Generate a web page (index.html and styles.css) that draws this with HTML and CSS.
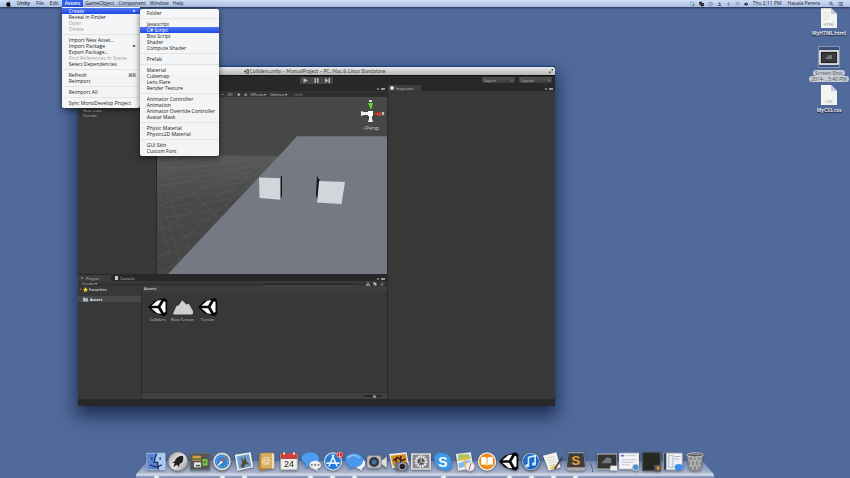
FILE: index.html
```html
<!DOCTYPE html>
<html lang="en">
<head>
<meta charset="utf-8">
<title>Desktop</title>
<link rel="stylesheet" href="styles.css">
</head>
<body>
<header class="menubar">
  <nav class="menus" aria-label="Application menu">
    <button class="menu-title apple" aria-label="Apple"><svg viewBox="0 0 16 18"><path d="M11 0c0 2-1.400 4-3.300 4C7.500 2 9 .4 11 0zM8 5c1 0 1.700-.8 3.200-.8 1.300 0 2.600.7 3.400 1.900-3 1.700-2.500 5.700.6 6.900-.8 2.200-2.200 4.600-3.800 4.600-1.200 0-1.600-.8-3.100-.8s-2 .8-3.100.8C3 17.600.600 13.500.600 10c0-3.600 2.200-5.700 4.400-5.700C6.300 4.300 7.200 5 8 5z"/></svg></button>
    <button class="menu-title app">Unity</button>
    <button class="menu-title">File</button>
    <button class="menu-title">Edit</button>
    <div class="menu-holder">
      <button class="menu-title open">Assets</button>
      <ul class="menu">
        <li class="parent"><button class="active">Create<span class="arrow"></span></button>
          <ul class="menu submenu">
            <li><button>Folder</button></li>
            <li class="sep"></li>
            <li><button>Javascript</button></li>
            <li><button class="active">C# Script</button></li>
            <li><button>Boo Script</button></li>
            <li><button>Shader</button></li>
            <li><button>Compute Shader</button></li>
            <li class="sep"></li>
            <li><button>Prefab</button></li>
            <li class="sep"></li>
            <li><button>Material</button></li>
            <li><button>Cubemap</button></li>
            <li><button>Lens Flare</button></li>
            <li><button>Render Texture</button></li>
            <li class="sep"></li>
            <li><button>Animator Controller</button></li>
            <li><button>Animation</button></li>
            <li><button>Animator Override Controller</button></li>
            <li><button>Avatar Mask</button></li>
            <li class="sep"></li>
            <li><button>Physic Material</button></li>
            <li><button>Physics2D Material</button></li>
            <li class="sep"></li>
            <li><button>GUI Skin</button></li>
            <li><button>Custom Font</button></li>
          </ul>
        </li>
        <li><button>Reveal in Finder</button></li>
        <li><button disabled>Open</button></li>
        <li><button disabled>Delete</button></li>
        <li class="sep"></li>
        <li><button>Import New Asset...</button></li>
        <li><button>Import Package<span class="arrow"></span></button></li>
        <li><button>Export Package...</button></li>
        <li><button disabled>Find References In Scene</button></li>
        <li><button>Select Dependencies</button></li>
        <li class="sep"></li>
        <li><button>Refresh<span class="key">⌘R</span></button></li>
        <li><button>Reimport</button></li>
        <li class="sep"></li>
        <li><button>Reimport All</button></li>
        <li class="sep"></li>
        <li><button>Sync MonoDevelop Project</button></li>
      </ul>
    </div>
    <button class="menu-title">GameObject</button>
    <button class="menu-title">Component</button>
    <button class="menu-title">Window</button>
    <button class="menu-title">Help</button>
  </nav>
  <div class="status">
    <svg viewBox="0 0 16 16"><rect x="1" y="2" width="11" height="9" rx="2" fill="#dfeaff" stroke="#3974ca" stroke-width="2"/><circle cx="11" cy="11" r="4" fill="#68b52d"/></svg>
    <svg viewBox="0 0 16 16"><path d="M1 1h8v4h6v10H6v-5H1z"/><path d="M4 4l8 8" stroke="#c4d3f0" stroke-width="2"/></svg>
    <svg viewBox="0 0 16 16" class="line"><circle cx="8" cy="8" r="6"/><path d="M8 4v4l3 2"/></svg>
    <svg viewBox="0 0 16 16"><path d="M8 2l5 7H3zM3 11h10v3H3z" fill="#4c5872"/></svg>
    <svg viewBox="0 0 16 16" class="line"><path d="M8 2v12M2 8h12"/></svg>
    <svg viewBox="0 0 16 16" class="line"><path d="M1 6q7-6 14 0M4 9q4-4 8 0M7 12l1 1 1-1"/></svg>
    <svg viewBox="0 0 16 16"><path d="M1 6h3l4-4v12l-4-4H1z"/><path d="M10 4q4 4 0 8" fill="none" stroke="#111" stroke-width="2"/></svg>
    <span>Thu 2:11 PM</span>
    <span class="user">Hasala Perera</span>
    <svg viewBox="0 0 16 16" class="line dark"><circle cx="6" cy="6" r="4"/><path d="M9 9l5 5"/></svg>
    <svg viewBox="0 0 16 16" class="line dark"><path d="M0 3h2M4 3h12M0 8h2M4 8h12M0 13h2M4 13h12"/></svg>
  </div>
</header>

<main class="desktop">
  <section class="window" aria-label="Unity editor">
    <div class="titlebar">
      <h1><svg viewBox="0 0 24 24"><use href="#unity"/></svg>Colliders.unity – ManualProject – PC, Mac &amp; Linux Standalone</h1>
      <button class="expand" aria-label="Full screen"><svg viewBox="0 0 10 10"><path d="M6 0h4v4zM0 6v4h4zM2 8l6-6" stroke="#555"/></svg></button>
    </div>
    <div class="toolbar">
      <div class="play">
        <button aria-label="Play"><svg viewBox="0 0 10 10"><path d="M1 0l9 5-9 5z"/></svg></button>
        <button aria-label="Pause"><svg viewBox="0 0 10 10"><path d="M1 0h3v10H1zM6 0h3v10H6z"/></svg></button>
        <button aria-label="Step"><svg viewBox="0 0 10 10"><path d="M0 0l7 5-7 5zM7 0h3v10H7z"/></svg></button>
      </div>
      <div class="pickers">
        <button class="picker">Layers<i></i></button>
        <button class="picker">Layout<i></i></button>
      </div>
    </div>
    <div class="editor">
      <div class="left">
        <div class="upper">
          <div class="hierarchy"><ul><li>New Cube</li><li>Terrain</li></ul></div>
          <div class="scene">
            <div class="tabs"><span class="tools"><i></i><b></b></span></div>
            <div class="scene-bar"><span>▪</span><span>2D</span><span>✹</span><span>◂)</span><span>Effects ▾</span><span>Gizmos ▾</span><input aria-label="Search scene" value="Q▾All"></div>
            <svg class="view" viewBox="157 97 230 177" preserveAspectRatio="none">
              <defs><linearGradient id="ground" x1="0" y1="0" x2="0" y2="1"><stop offset="0" stop-color="#585858"/><stop offset=".4" stop-color="#494949"/><stop offset="1" stop-color="#434343"/></linearGradient></defs>
              <path fill="#474747" d="M157 97h230v177H157z"/>
              <path fill="url(#ground)" d="M157 155l130 1v118H157z"/>
              <g class="grid"><path d="M157 159l110-1M157 163l108-3M157 168l104-5M157 173l100-6M157 179l96-7M157 185l92-8M157 192l86-9M157 200l80-9M157 209l73-10M157 219l64-10M157 230l55-11M157 243l44-11M157 257l32-11M157 272l22-9"/><path d="M285 157L157 171M283 158L157 188M282 158L157 207M282 159L157 231M280 160L157 260M278 162L163 274M235 157L157 163M210 157l-53 3M157 165l42 109M157 185l27 89M157 211l18 63M157 157l75 75M157 160l58 89M175 157l67 64M195 157l60 50M220 157l46 36M245 157l31 23"/></g>
              <path fill="#757983" d="M297 136.500h90V274H168z"/>
              <path fill="#777b86" d="M297 136.500h90V158H279z"/>
              <path d="M280 179l2-4v21l-2 4z" fill="#111"/><path d="M259 177.500l21.500.8v21.500L259.500 198z" fill="#d2d6da"/>
              <path d="M317 176l3 5-2 19-2-4z" fill="#111"/><path d="M319 181l26 1-3.500 22-24.500-1.500z" fill="#d2d6da"/>
              <path d="M368 103h5l-2 7z" fill="#6ad82a"/><path d="M369 101h3" stroke="#ddd" stroke-width="2"/>
              <path d="M361 111l3 1h4v3h-4l-3 1zM368 122l1-3v-3h3v3l1 3z" fill="#eee"/><path d="M373 114l8-2v4z" fill="#dd3922"/><path d="M368 111h5v5h-5z" fill="#fff"/><path d="M382 112l2 3m0-3l-2 3" stroke="#ddd"/>
              <text x="363" y="130" class="persp">&lt;Persp</text>
            </svg>
          </div>
        </div>
        <div class="project">
          <div class="tabs">
            <button class="tab on"><i class="dot"></i>Project</button><button class="tab"><i class="page"></i>Console</button>
            <span class="tools"><i></i><b></b></span>
          </div>
          <div class="project-bar"><button>Create ▾</button><input aria-label="Search assets"><span class="filters"><svg viewBox="0 0 12 12"><path d="M4 1h4v4H4zM0 7h5v4H0zM7 7h5v4H7z"/></svg><svg viewBox="0 0 12 12"><path d="M1 1h5l6 6-5 5-6-6z"/></svg><svg viewBox="0 0 12 12"><path d="M6 1l2 4h4L9 8l1 4-4-2-4 2 1-4-3-3h4z" opacity=".5"/></svg></span></div>
          <div class="panes">
            <ul class="tree">
              <li><i class="tri"></i><svg viewBox="0 0 12 12"><path d="M6 0l2 4 4 .5-3 3 .8 4.500L6 10l-3.800 2L3 7.500l-3-3L4 4z" fill="#ffd21e"/></svg>Favorites</li>
              <li class="picked"><svg viewBox="0 0 12 12"><path d="M0 1h5l1 2h6v8H0z" fill="#a9b9c6"/></svg>Assets</li>
            </ul>
            <div class="browser">
              <h2>Assets</h2>
              <div class="files">
                <figure><svg viewBox="0 0 24 24"><use href="#unity"/></svg><figcaption>Colliders</figcaption></figure>
                <figure><svg viewBox="0 0 24 24"><path d="M0 20L4 11l3-1 4-6 5 5 3-1 5 9v3q-2 1-4 1H3q-2 0-3-1z" fill="#d0d0d0"/></svg><figcaption>New Terrain</figcaption></figure>
                <figure><svg viewBox="0 0 24 24"><use href="#unity"/></svg><figcaption>Terrain</figcaption></figure>
              </div>
              <div class="zoom"><input type="range" aria-label="Icon size" value="60"></div>
            </div>
          </div>
        </div>
      </div>
      <aside class="inspector">
        <div class="tabs"><button class="tab on"><i class="info"></i>Inspector</button><span class="tools"><i></i><b></b></span></div>
        <div class="empty"></div>
      </aside>
    </div>
    <div class="statusbar"></div>
  </section>

  <div class="shortcuts">
    <figure><svg viewBox="0 0 16 20"><use href="#doc"/><path d="M2 5h6M2 8h8M2 11h5" stroke="#ddd"/><text x="8" y="18">HTML</text></svg><figcaption>MyHTML.html</figcaption></figure>
    <figure class="selected"><svg viewBox="0 0 22 22"><path fill="#3c5078" stroke="#8495b5" d="M.5.500h21v21H.500z"/><path fill="#222" stroke="#fff" stroke-width="1.500" d="M2 5h18v13H2z"/><path d="M4 7h14v9H4z" fill="#383b3d"/><path d="M7 13l4-4h3v4z" fill="#777"/></svg><figcaption><span>Screen Shot</span><span>2014-...5.40 PM</span></figcaption></figure>
    <figure><svg viewBox="0 0 16 20"><use href="#doc"/><text x="8" y="18">CSS</text></svg><figcaption>MyCSS.css</figcaption></figure>
  </div>
</main>

<footer class="dock">
  <div class="shelf"></div>
  <div class="apps">
    <a href="#" aria-label="Finder" class="run"><svg viewBox="0 0 24 24"><path fill="#a9c9f2" d="M1 2h22v20H1z"/><path d="M1 2h12q-3 6-3 11h4q0 5 1 9H1z" fill="#5b83d2"/><path d="M13 2q-3 6-3 11h4q0 5 1 9M5 16q7 5 14 0M7 7v3M17 7v3" class="ink"/><path d="M1 2h22v20H1z" fill="none" stroke="#d5e5fa" opacity=".6"/></svg></a>
    <a href="#" aria-label="Launchpad"><svg viewBox="0 0 24 24"><circle cx="12" cy="12" r="11.500" fill="url(#silver)" stroke="#888"/><path d="M18 5q-8 0-10 7l-3 1 3 1-2 5 5-3 2 3 1-4q6-3 4-10z" fill="#222"/></svg></a>
    <a href="#" aria-label="Mission Control"><svg viewBox="0 0 24 24"><rect x="0" y="2" width="24" height="20" rx="1" fill="#555" stroke="#777"/><path fill="#dba02f" d="M3 5h10v6H3z"/><path fill="#78c13d" d="M15 9h6v8h-6z"/><path fill="#eee" d="M5 13h8v6H5z"/><path d="M3 9h10M7 17h5M16 13h3" stroke="#426f49" stroke-width="2"/></svg></a>
    <a class="run" href="#" aria-label="Safari"><svg viewBox="0 0 24 24"><circle cx="12" cy="12" r="11" fill="#ddd" stroke="#777"/><circle cx="12" cy="12" r="8.500" fill="#3385d0"/><circle cx="12" cy="12" r="6.500" fill="none" stroke="#c8e4fc" stroke-dasharray="1 2"/><path d="M19 5l-6 8-2-2z" fill="#e74732"/><path d="M5 19l6-8 2 2z" fill="#fff"/></svg></a>
    <a class="run" href="#" aria-label="Mail"><svg viewBox="0 0 24 24"><path d="M1 4l19-3 3 18-19 4z" fill="#f2f2f2"/><path d="M3 6l15-3 3 15-15 3z" fill="#719fcf"/><path d="M8 6l4 5 1-6 2 7 4 4-5-1-3 5-3-2 2-5z" fill="#5b4933"/></svg></a>
    <a href="#" aria-label="Contacts"><svg viewBox="0 0 24 24"><path d="M4 2l17-1 1 19-17 3-2-2z" fill="#b5853c"/><path d="M6 2h13v18H6z" fill="#d7ad62"/><path d="M19 2l3 1v17l-3 1z" fill="#eee0bd"/><text x="12" y="15" fill="#fff2cf" font-size="11">@</text></svg></a>
    <a href="#" aria-label="Calendar"><svg viewBox="0 0 24 24"><path fill="#eee" stroke="#aaa" d="M2 3h20v19H2z"/><path d="M2 2h20v7H2z" fill="#c8413a"/><path d="M6 1v3M18 1v3" stroke="#eee" stroke-width="2"/><text x="12" y="19" fill="#222" font-size="11">24</text></svg></a>
    <a class="run" href="#" aria-label="Messages"><svg viewBox="0 0 24 24"><path d="M11 1c15 0 14 17 0 16l-6 3 1-5C-4 10 1 1 11 1z" fill="#4d9cf0"/><path d="M17 11c9 0 9 10 2 10l2 3-6-3c-7-1-6-10 2-10z" fill="#eee"/><path d="M12 16h2m2 0h2m2 0h2" stroke="#777" stroke-width="2"/></svg></a>
    <a class="run" href="#" aria-label="App Store"><svg viewBox="0 0 24 24"><circle cx="12" cy="12" r="11" fill="#ccd5df"/><circle cx="12" cy="12" r="9.500" fill="#217bd9"/><path d="M13 4L7 18M11 4l6 14M4 14h16" stroke="#e4effa" stroke-width="2"/><circle cx="20" cy="4" r="3.500" fill="#de2927" stroke="#e99"/><text x="20" y="6" fill="#fff" font-size="6">1</text></svg></a>
    <a class="run" href="#" aria-label="Chat"><svg viewBox="0 0 24 24"><path d="M17 8c9 0 9 11 3 12l1 3-6-3-5-4z" fill="#f2f5fa"/><path d="M11 2c15 0 14 17 0 17l-7 2 1-4C-4 11 1 2 11 2z" fill="#4997e9"/><path d="M3 8q7-7 15 0" stroke="#8ac3fa" stroke-width="2" fill="none"/></svg></a>
    <a href="#" aria-label="FaceTime"><svg viewBox="0 0 24 24"><rect x="0" y="5" width="17" height="15" rx="3" fill="#bcbec0" stroke="#888"/><path d="M17 11l7-5v14l-7-5z" fill="#ddd" stroke="#888"/><circle cx="8.500" cy="12.500" r="6" fill="#303746"/><circle cx="8.500" cy="12.500" r="3" fill="#476f9c"/></svg></a>
    <a href="#" aria-label="iPhoto"><svg viewBox="0 0 24 24"><path d="M0 3l21-2 3 15-20 4z" fill="#eee"/><path d="M2 5l18-2 2 12-17 3z" fill="#d88b24"/><path d="M5 11l5-4 5 4 5-2M8 8l2 9M14 5v12" stroke="#3a281b" stroke-width="2" fill="none"/><rect x="7" y="13" width="16" height="10" rx="2" fill="#6b7480"/><circle cx="16" cy="18" r="4" fill="#222" stroke="#bcc7d4"/></svg></a>
    <a href="#" aria-label="System Preferences"><svg viewBox="0 0 24 24"><path fill="#888" stroke="#ddd" stroke-width="2" d="M1 3h22v18H1z"/><circle cx="12" cy="12" r="6" fill="#999" stroke="#eee" stroke-width="3" stroke-dasharray="2 1"/><circle cx="12" cy="12" r="4" fill="#555"/><path d="M12 8v4l-3 3m3-3l4 2" stroke="#ddd" fill="none"/></svg></a>
    <a class="run" href="#" aria-label="Skype"><svg viewBox="0 0 24 24"><circle cx="8" cy="8" r="7" fill="#3b93dc"/><circle cx="16" cy="16" r="7" fill="#3b93dc"/><circle cx="12" cy="12" r="10" fill="#3f99e2"/><text x="12" y="18" fill="#fff" font-size="17" font-weight="bold">S</text></svg></a>
    <a href="#" aria-label="Maps"><svg viewBox="0 0 24 24"><path d="M1 3l18-2 3 19-18 3z" fill="#eee"/><path d="M3 4l14-1 1 6-14 2z" fill="#96c974"/><path d="M4 14l13-4 3 6-15 4z" fill="#83b7e7"/><path d="M3 10l16-3M10 3l3 18" stroke="#e9ba41" stroke-width="2"/><circle cx="18" cy="18" r="5.500" fill="#eee" stroke="#bbb"/><path d="M19 14l-2 8" stroke="#b44"/></svg></a>
    <a href="#" aria-label="iBooks"><svg viewBox="0 0 24 24"><circle cx="12" cy="12" r="11" fill="#eee"/><circle cx="12" cy="12" r="9.500" fill="#eb8b1d"/><path d="M5 7q5-1 7 1 2-2 7-1v9q-5-1-7 1-2-2-7-1z" fill="#fff"/><path d="M12 8v9" stroke="#e48a25"/></svg></a>
    <a class="run" href="#" aria-label="Unity"><svg viewBox="0 0 24 24"><g id="unity"><path fill="#080808" d="M0 12L7 5 20 1l3 3v16l-3 3L7 19z"/><path fill="#fff" d="M4 10.500l7-6 5-1-4 7zM4 13.500l7 6 5 1-4-7zM19 5l2 1v12l-2 1-4-7z"/></g></svg></a>
    <a class="run" href="#" aria-label="iTunes"><svg viewBox="0 0 24 24"><circle cx="12" cy="12" r="11" fill="#b7cce1" stroke="#555"/><circle cx="12" cy="12" r="9.500" fill="#1e67c4"/><path d="M9 17V7l8-2v10" fill="none" stroke="#c8ecff" stroke-width="2"/><ellipse cx="7.500" cy="17" rx="2.500" ry="2" fill="#c8ecff"/><ellipse cx="15.500" cy="15" rx="2.500" ry="2" fill="#c8ecff"/></svg></a>
    <a class="run" href="#" aria-label="TextEdit"><svg viewBox="0 0 24 24"><path d="M0 5l16-4 5 18-14 4z" fill="#f3f3ed"/><path d="M5 8l9-2M6 11l9-2M7 14l9-2M8 17l8-2" stroke="#ccc"/><path d="M9 19l5-3 3 3-8 3z" fill="#e4c84e"/><path d="M23 7l-9 14" stroke="#444" stroke-width="2"/></svg></a>
    <a class="run" href="#" aria-label="Sublime Text"><svg viewBox="0 0 24 24"><path d="M3 1h18l3 18-2 4H2l-2-4z" fill="#aaa"/><path d="M3 2h18l2 17H1z" fill="#3d3d3d"/><text x="12" y="16" fill="#f6a02e" font-size="16" font-weight="bold">S</text></svg></a>
    <span class="divider"></span>
    <a href="#" aria-label="Screenshot window"><svg viewBox="0 0 24 24"><path fill="#333" stroke="#ddd" d="M0 3h24v18H0z"/><path d="M5 14l7-7 5 1v6z" fill="#74777d"/><path d="M16 17h8v6h-8z" fill="#eee"/></svg></a>
    <a href="#" aria-label="Safari window"><svg viewBox="0 0 24 24"><path fill="#f4f4f6" stroke="#ccc" d="M0 2h24v19H0z"/><path d="M2 5h4" stroke="#8467cf" stroke-width="2"/><path d="M7 5h13M3 10h18M3 13h14M3 16h10" stroke="#bbc"/><circle cx="20" cy="19" r="4" fill="#4b91d2" stroke="#ddd"/></svg></a>
    <a href="#" aria-label="Editor window"><svg viewBox="0 0 24 24"><path fill="#272822" stroke="#555" d="M2 1h21v22H2z"/><path fill="#555" d="M16 16h8v8h-8z"/><path fill="#e78e25" d="M19 18h3v4h-3z"/></svg></a>
    <a href="#" aria-label="Chat window"><svg viewBox="0 0 24 24"><path fill="#eef0f4" stroke="#bbb" d="M1 2h22v20H1z"/><path fill="#39424f" d="M1 2h3v20H1z"/><path d="M7 5h5v14H7zM14 6h7M14 9h5" stroke="#9cabc1" fill="none"/><ellipse cx="19" cy="19" rx="5" ry="4" fill="#3d90e9"/></svg></a>
    <a href="#" aria-label="Trash"><svg viewBox="0 0 24 24"><path d="M2 4l3 18q7 3 14 0l3-18z" fill="#85888c"/><path d="M4 5l6 17M9 5l6 17M14 5l4 14M20 5l-6 17M15 5L9 22M10 5L6 19M4 11h16M5 17h14" stroke="#bbb"/><ellipse cx="12" cy="4" rx="10" ry="2.500" fill="#555" stroke="#d5d5d5"/><path d="M5 4l5-1 8 1" stroke="#aaa" fill="none"/></svg></a>
  </div>
</footer>

<svg class="defs" aria-hidden="true"><defs>
  <linearGradient id="silver" x1="0" y1="0" x2="1" y2="1"><stop offset="0" stop-color="#999"/><stop offset=".5" stop-color="#eee"/><stop offset="1" stop-color="#888"/></linearGradient>
  <symbol id="doc" viewBox="0 0 16 20"><path d="M0 0h10l6 6v14H0z" fill="#f4f4f4"/><path d="M10 0l6 6h-6z" fill="#c5cad3"/></symbol>
</defs></svg>
</body>
</html>
```
FILE: styles.css
```css
* { box-sizing: border-box; }

body {
  margin: 0;
  min-height: 100vh;
  display: flex;
  flex-direction: column;
  overflow: hidden;
  position: relative;
  background: #506a9b;
  color: #222;
  font: 5px/6px "Open Sans", "Noto Sans", sans-serif;
}

button, input {
  margin: 0;
  padding: 0;
  border: 0;
  background: none;
  color: inherit;
  font: inherit;
}

ul, figure, h1, h2 { margin: 0; padding: 0; list-style: none; font: inherit; }
svg { display: block; }
.defs { position: absolute; width: 0; height: 0; }

/* Menu bar */
.menubar {
  display: flex;
  justify-content: space-between;
  height: 7px;
  background: linear-gradient(#d0ddf5, #a9bde5);
  box-shadow: 0 1px 2px rgba(0, 0, 0, .5);
  position: relative;
  z-index: 3;
}
.menus { display: flex; padding-left: 3px; }
.menu-title { display: block; height: 7px; padding: 0 3px; line-height: 7px; }
.apple svg { width: 5px; height: 6px; }
.menu-title.app { font-weight: 600; }
.menu-title.open { background: #2b5df0; color: #fff; font-weight: 600; }
.menu-holder { position: relative; }
.menu-holder ~ .menu-title { padding: 0 2px; }

.menu {
  position: absolute;
  top: 7px;
  left: 0;
  width: 78px;
  padding: 1px 0 2px;
  background: rgba(248, 248, 249, .98);
  border-radius: 0 0 2px 2px;
  box-shadow: 0 2px 6px rgba(0, 0, 0, .6);
}
.menu .parent { position: relative; }
.submenu { top: 1px; left: 100%; width: 79px; border-radius: 2px; }
.menu button {
  display: flex;
  justify-content: space-between;
  align-items: center;
  width: 100%;
  height: 6px;
  padding: 0 4px 0 7px;
  white-space: nowrap;
}
.menu button.active { background: linear-gradient(#4e75f2, #1f49e8); color: #fff; }
.menu button:disabled { color: #a2a2a4; }
.sep { height: 5px; padding-top: 2px; }
.sep::before { content: ""; display: block; height: 1px; background: #e3e3e5; }
.arrow { border: 1px solid transparent; border-left: 3px solid currentColor; border-right: 0; }

.status { display: flex; align-items: center; gap: 4px; padding-right: 7px; line-height: 7px; }
.status svg { width: 5px; height: 6px; }
.status .user { padding: 0 5px 0 2px; }
.line { fill: none; stroke: #68758e; stroke-width: 2; }
.line.dark { stroke: #29344a; }

/* Editor window */
.desktop { flex: 1; position: relative; }
.window {
  position: absolute;
  left: 78px;
  top: 60px;
  width: 477px;
  height: 339px;
  display: flex;
  flex-direction: column;
  background: #282828;
  color: #c4c4c4;
  font-size: 4px;
  line-height: 5px;
  box-shadow: 0 -1px 1px #173f7c, 0 8px 16px 2px rgba(10, 20, 50, .7);
}
.titlebar {
  display: flex;
  align-items: center;
  height: 8px;
  padding: 0 2px;
  border-radius: 2px 2px 0 0;
  background: linear-gradient(#ececec, #b5b5b5);
  color: #444;
}
.titlebar h1 { flex: 1; display: flex; justify-content: center; align-items: center; gap: 1px; font: 5px/6px Lato, sans-serif; }
.titlebar h1 svg { width: 5px; height: 5px; }
.expand svg { width: 4px; height: 4px; }

.toolbar { display: grid; grid-template-columns: 1fr auto 1fr; height: 10px; padding: 0 3px 1px; border-top: 1px solid #111; align-items: center; }
.play { grid-column: 2; display: flex; border-radius: 1px; background: #454545; }
.play button { width: 11px; height: 7px; display: grid; place-items: center; }
.play svg { width: 5px; height: 5px; fill: #b5b5b5; }
.pickers { display: flex; justify-content: flex-end; gap: 4px; }
.picker { display: flex; justify-content: space-between; align-items: center; width: 33px; height: 6px; padding: 0 2px; border-radius: 1px; background: linear-gradient(#525252, #3c3c3c); }
.picker i { border: 1px solid transparent; border-top-color: #aaa; border-bottom: 0; }

.editor { flex: 1; display: flex; min-height: 0; gap: 1px; }
.left { flex: 309; min-width: 0; display: flex; flex-direction: column; }
.inspector { flex: 167; display: flex; flex-direction: column; }
.tabs { display: flex; align-items: stretch; height: 6px; }
.tab { display: flex; align-items: center; gap: 2px; padding: 0 4px; }
.tab.on { width: 33px; padding: 0 2px; background: #3d3d3d; border-radius: 1px 1px 0 0; }
.info { width: 4px; height: 4px; border-radius: 50%; background: #ddd; }
.dot { width: 2px; height: 2px; margin: 0 1px; background: #777; }
.page { width: 3px; height: 4px; background: #ccc; }
.tools { display: flex; align-items: flex-end; gap: 2px; margin-left: auto; padding: 0 2px 1px; }
.tools i { width: 2px; height: 2px; background: #777; }
.tools b { width: 4px; height: 2px; background: #999; }
.empty { flex: 1; background: #383838; }

.upper { flex: 1; display: flex; gap: 1px; min-height: 0; }
.hierarchy { width: 78px; padding: 23px 5px 0; background: #383838; }
.scene { flex: 1; display: flex; flex-direction: column; min-width: 0; }
.scene-bar { display: flex; align-items: center; gap: 4px; height: 6px; padding: 0 1px 0 65px; background: #343434; white-space: nowrap; }
.scene-bar input { flex: 1; min-width: 0; height: 5px; padding: 0 2px; border-radius: 2px; background: #2d2d2d; color: #777; }
.view { flex: 1; width: 100%; min-height: 0; }
.grid { fill: none; stroke: #666; stroke-width: .5; opacity: .6; }
.persp { fill: #ccc; font-size: 5px; }

.project { height: 125px; display: flex; flex-direction: column; padding-top: 1px; background: #282828; }
.project-bar { display: flex; align-items: center; height: 5px; padding: 0 3px 0 4px; background: linear-gradient(#393939, #303030); }
.project-bar input { width: 98px; height: 4px; margin-left: auto; border-radius: 2px; background: #2c2c2c; border: 1px solid #404040; }
.filters { display: flex; gap: 3px; padding-left: 6px; }
.filters svg { width: 4px; height: 4px; fill: #bbb; }
.panes { flex: 1; display: flex; gap: 1px; }
.tree { width: 63px; background: #383838; color: #ddd; font-weight: 600; }
.tree li { display: flex; align-items: center; gap: 1px; height: 6px; padding-left: 2px; }
.tree svg { width: 5px; height: 5px; }
.tree .picked { margin-top: 4px; padding-left: 5px; gap: 2px; background: #484848; color: #fff; }
.tri { border: 1px solid transparent; border-left-color: #999; }
.browser { flex: 1; display: flex; flex-direction: column; background: #383838; }
.browser h2 { height: 6px; padding-left: 2px; background: #3e3e3e; font-weight: 600; color: #ddd; }
.files { flex: 1; display: flex; padding: 5px 3px; }
.files figure { width: 25px; display: flex; flex-direction: column; align-items: center; white-space: nowrap; }
.files svg { width: 20px; height: 20px; }
.zoom { display: flex; justify-content: flex-end; align-items: center; height: 7px; padding-right: 5px; background: #404040; border-top: 1px solid #303030; }
.zoom input { width: 18px; height: 2px; appearance: none; background: #2b2b2b; }
.zoom input::-webkit-slider-thumb { appearance: none; width: 3px; height: 3px; border-radius: 50%; background: #999; }
.statusbar { height: 7px; }

/* Desktop files */
.shortcuts { position: absolute; top: 1px; right: 1px; width: 40px; display: flex; flex-direction: column; align-items: center; color: #fff; }
.shortcuts figure { display: flex; flex-direction: column; align-items: center; gap: 2px; margin-bottom: 10px; }
.shortcuts svg { width: 16px; height: 20px; }
.shortcuts text { font-size: 4px; fill: #888; text-anchor: middle; }
.shortcuts figcaption { text-align: center; white-space: nowrap; font-weight: 600; text-shadow: 0 1px 1px #000; }
.shortcuts .selected { margin-bottom: 3px; }
.shortcuts .selected svg { width: 22px; height: 22px; }
.selected figcaption { display: flex; flex-direction: column; align-items: center; color: #555; text-shadow: none; font-weight: 400; }
.selected span { padding: 0 2px; border-radius: 3px; background: #c6cbd4; }

/* Dock */
.dock { position: absolute; bottom: 0; left: 0; right: 0; width: 68%; margin: 0 auto; padding: 0 8px 6px 9px; }
.shelf {
  position: absolute;
  inset: auto 0 0;
  height: 17px;
  background: linear-gradient(#7285ae, #a3afca 60%, #bcc5d8 75%, #d9dfea 80%, #7f8fb3 95%);
  clip-path: polygon(2% 0, 98% 0, 100% 80%, 100% 100%, 0 100%, 0 80%);
}
.apps { position: relative; display: flex; align-items: flex-end; }
.apps a { flex: 1; display: flex; justify-content: center; position: relative; }
.apps svg { width: 20px; height: 21px; filter: drop-shadow(0 1px 1px rgba(0, 0, 0, .4)); }
.apps text { text-anchor: middle; font-family: "Liberation Sans", sans-serif; }
.apps .run::after { content: ""; position: absolute; bottom: -6px; width: 5px; height: 2px; border-radius: 50%; background: #e8fbff; box-shadow: 0 0 2px #bdeaff; }
.ink { fill: none; stroke: #1d2c5c; stroke-width: 1.500; }
.divider { width: 9px; height: 12px; background: linear-gradient(75deg, transparent 45%, #62749c 45%, #62749c 55%, transparent 55%); }
```
